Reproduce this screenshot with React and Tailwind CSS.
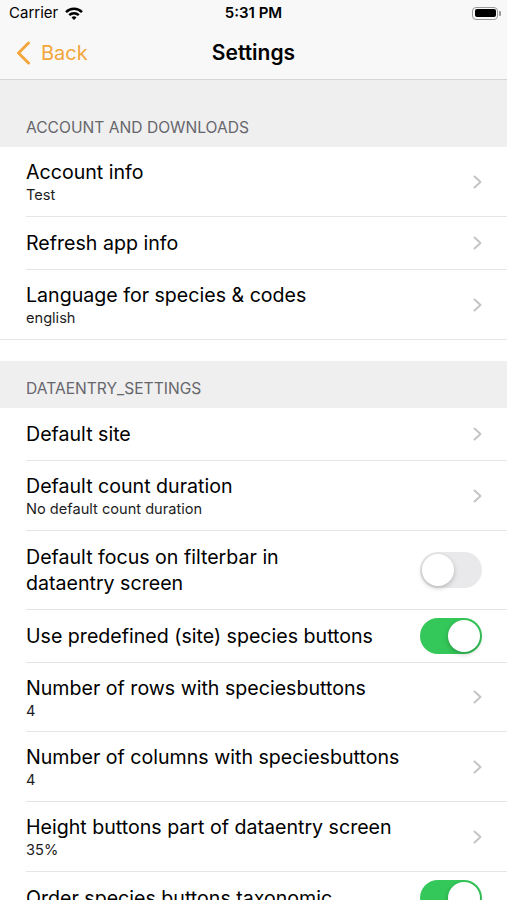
import React from "react";

function Chevron() {
  return (
    <svg width="9" height="14" viewBox="0 0 9 14" className="shrink-0">
      <path d="M1.5 1.5 L7.5 7 L1.5 12.5" fill="none" stroke="#c4c4c7" strokeWidth="2" strokeLinecap="round" strokeLinejoin="round" />
    </svg>
  );
}

function Toggle({ on }) {
  return (
    <div
      className={
        on
          ? "w-[62px] h-[36px] rounded-full bg-[#34c759] p-[2px] flex justify-end shrink-0"
          : "w-[62px] h-[36px] rounded-full bg-[#e9e9eb] p-[2px] flex justify-start shrink-0"
      }
    >
      <div className="w-[32px] h-[32px] rounded-full bg-white shadow-[0_2px_5px_rgba(0,0,0,0.22)]" />
    </div>
  );
}

function Row({ h, title, sub, right, border = true }) {
  return (
    <div className="pl-[26px] bg-white">
      <div
        className={
          (border ? "border-b border-[#e5e5e7] " : "") +
          "flex items-center justify-between pr-[25px]"
        }
        style={{ height: h }}
      >
        <div className="flex flex-col">
          <div className="text-[19.6px] leading-[26px] text-black">{title}</div>
          {sub && <div className="text-[14.6px] leading-[17px] mt-[2px] text-[#1c1c1e]">{sub}</div>}
        </div>
        {right === "chev" ? <Chevron /> : right === "on" ? <Toggle on /> : right === "off" ? <Toggle on={false} /> : null}
      </div>
    </div>
  );
}

function Header({ children, top }) {
  return (
    <div className={"pl-[26px] pb-[9px] text-[15.6px] leading-[20px] text-[#66666b] " + top}>{children}</div>
  );
}

export default function App() {
  return (
    <div className="w-[507px] min-h-[900px] bg-[#efeff0] font-['Inter',sans-serif] overflow-hidden">
      <div className="bg-[#f8f8f8] border-b border-[#d6d6d8]">
        <div className="h-[26px] grid grid-cols-3 items-center">
          <div className="flex items-center pl-[9px] gap-[7px]">
            <span className="text-[15px] text-black">Carrier</span>
            <svg width="18" height="13" viewBox="0 0 18 13">
              <path d="M9 13 L6.5 10.5 A3.54 3.54 0 0 1 11.5 10.5 Z" fill="#000" />
              <path d="M3.34 7.34 A8 8 0 0 1 14.66 7.34 L12.89 9.11 A5.5 5.5 0 0 0 5.11 9.11 Z" fill="#000" />
              <path d="M0.16 4.16 A12.5 12.5 0 0 1 17.84 4.16 L16.07 5.93 A10 10 0 0 0 1.93 5.93 Z" fill="#000" />
            </svg>
          </div>
          <div className="text-center text-[15px] font-semibold text-black">5:31 PM</div>
          <div className="flex items-center justify-end pr-[6px]">
            <div className="w-[26px] h-[13px] rounded-[4px] border border-[#9a9a9a] p-[1.5px]">
              <div className="w-full h-full bg-black rounded-[2px]" />
            </div>
            <div className="w-[2px] h-[5px] bg-[#9a9a9a] rounded-r-[1px] ml-[1px]" />
          </div>
        </div>
        <div className="h-[53px] grid grid-cols-3 items-center">
          <div className="flex items-center pl-[16px] gap-[10px] text-[#f2a63b]">
            <svg width="15" height="24" viewBox="0 0 15 24">
              <path d="M12.5 2 L2.5 12 L12.5 22" fill="none" stroke="#f2a63b" strokeWidth="3" strokeLinecap="round" strokeLinejoin="round" />
            </svg>
            <span className="text-[20px]">Back</span>
          </div>
          <div className="text-center text-[21px] font-semibold text-black">Settings</div>
          <div />
        </div>
      </div>

      <Header top="pt-[38px]">ACCOUNT AND DOWNLOADS</Header>
      <div className="bg-white">
        <Row h={70} title="Account info" sub="Test" right="chev" />
        <Row h={53} title="Refresh app info" right="chev" />
        <Row h={69} title="Language for species & codes" sub="english" right="chev" border={false} />
        <div className="h-[22px] border-t border-[#e5e5e7]" />
      </div>

      <Header top="pt-[18px]">DATAENTRY_SETTINGS</Header>
      <div className="bg-white">
        <Row h={53} title="Default site" right="chev" />
        <Row h={70} title="Default count duration" sub="No default count duration" right="chev" />
        <Row h={79} title={<>Default focus on filterbar in<br />dataentry screen</>} right="off" />
        <Row h={53} title="Use predefined (site) species buttons" right="on" />
        <Row h={69} title="Number of rows with speciesbuttons" sub="4" right="chev" />
        <Row h={70} title="Number of columns with speciesbuttons" sub="4" right="chev" />
        <Row h={70} title="Height buttons part of dataentry screen" sub="35%" right="chev" />
        <Row h={53} title="Order species buttons taxonomic" right="on" />
      </div>
    </div>
  );
}
